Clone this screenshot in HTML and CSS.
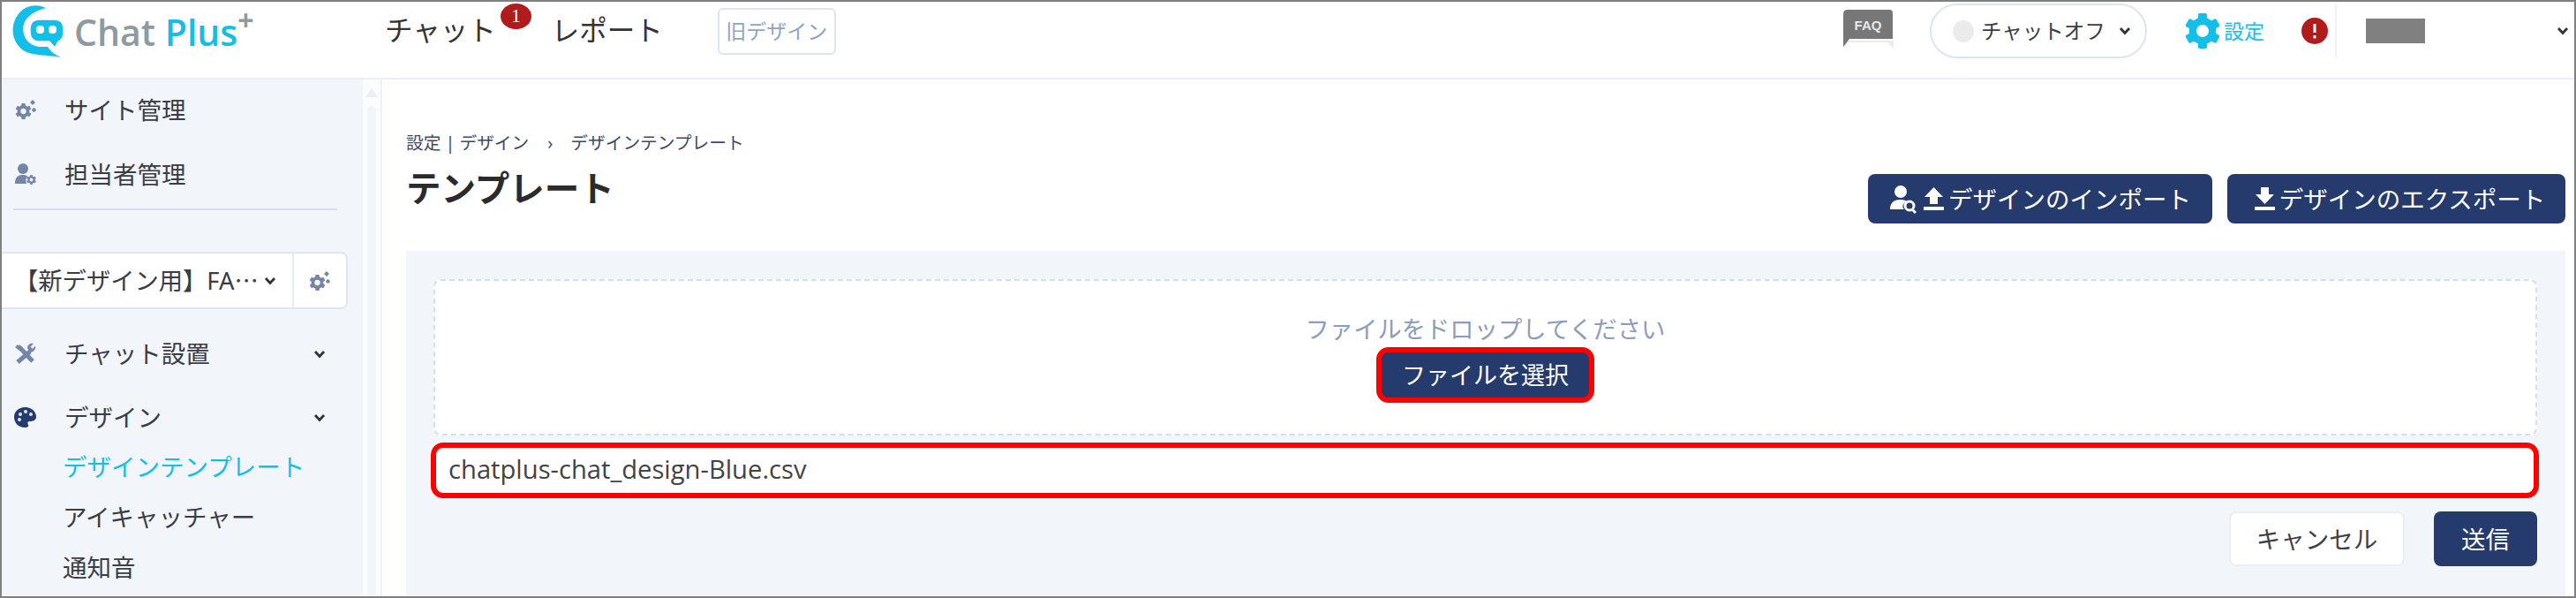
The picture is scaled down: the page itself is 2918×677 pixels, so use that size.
FILE: index.html
```html
<!DOCTYPE html>
<html lang="ja">
<head>
    <meta charset="UTF-8">
    <meta name="viewport" content="width=device-width, initial-scale=1.0">
    <title>テンプレート</title>
    <link rel="stylesheet" href="styles.css">
</head>
<body>
    <svg class="icon-defs" width="0" height="0">
        <symbol id="gear" viewBox="0 0 24 24">
            <circle cx="12" cy="12" r="6.7" fill="none" stroke="currentColor" stroke-width="5"/>
            <g fill="currentColor">
                <rect x="9" y="0" width="6" height="5" rx="1"/>
                <rect x="9" y="0" width="6" height="5" rx="1" transform="rotate(60 12 12)"/>
                <rect x="9" y="0" width="6" height="5" rx="1" transform="rotate(120 12 12)"/>
                <rect x="9" y="0" width="6" height="5" rx="1" transform="rotate(180 12 12)"/>
                <rect x="9" y="0" width="6" height="5" rx="1" transform="rotate(240 12 12)"/>
                <rect x="9" y="0" width="6" height="5" rx="1" transform="rotate(300 12 12)"/>
            </g>
        </symbol>
        <symbol id="cogs" viewBox="0 0 25 22">
            <use href="#gear" x="1" y="4" width="19" height="18"/>
            <path d="M21 0 L24 3 L21 6 L18 3 Z" fill="currentColor"/>
            <circle cx="22.500" cy="11.500" r="2.200" fill="currentColor"/>
        </symbol>
        <symbol id="chevron" viewBox="0 0 14 10">
            <path d="M2 2 L7 7.500 L12 2" fill="none" stroke="currentColor" stroke-width="2.800"/>
        </symbol>
        <symbol id="arrow-up" viewBox="0 0 23 26">
            <path d="M11.500 0 L22 11 H16 V19 H7 V11 H1 Z M0 22 H23 V26 H0 Z" fill="currentColor"/>
        </symbol>
        <symbol id="arrow-down" viewBox="0 0 23 26">
            <path d="M7 0 H16 V8 H22 L11.500 19 L1 8 H7 Z M0 22 H23 V26 H0 Z" fill="currentColor"/>
        </symbol>
    </svg>

    <div class="frame">
        <header class="topbar">
            <div class="logo">
                <svg class="logo-mark" viewBox="14 4 58 62" width="58" height="62">
                    <path d="M52 8 C43 3 28 4 20 16 C10 30 14 50 30 58 C40 62 52 61 69 64 C62 61 57 57 54 52 L44 52 C30 50 24 38 27 26 C30 17 40 11 52 8 Z" fill="#13bfe8"/>
                    <path d="M44 21 H62 C68 21 72 25 72 31 V36 C72 42 68 46 66 46 L62 53 L56 46 H44 C38 46 34 42 34 36 V31 C34 25 38 21 44 21 Z" fill="#13bfe8" stroke="#fff" stroke-width="1.500"/>
                    <rect x="41" y="28" width="9" height="9" rx="4" fill="#fff"/>
                    <rect x="55" y="28" width="9" height="9" rx="4" fill="#fff"/>
                </svg>
                <span class="logo-text">Chat <b>Plus</b><sup>+</sup></span>
            </div>
            <nav class="topnav">
                <a class="topnav-link">チャット<span class="count-badge">1</span></a>
                <a class="topnav-link">レポート</a>
            </nav>
            <button class="old-design">旧デザイン</button>

            <div class="topbar-right">
                <div class="faq">
                    <svg viewBox="0 0 57 44" width="57" height="44">
                        <path d="M0 35 H57 V44 L50 37 H6 L0 44 Z" fill="#eeece4"/>
                        <path d="M5 0 H52 Q56 0 56 4 V33 H7 L0 42 V5 Q0 0 5 0 Z" fill="#777"/>
                        <text x="28" y="23" text-anchor="middle" class="faq-text">FAQ</text>
                    </svg>
                </div>
                <div class="chat-toggle">
                    <span class="chat-dot"></span>
                    <span class="chat-label">チャットオフ</span>
                    <svg class="chat-chevron" width="14" height="10"><use href="#chevron"/></svg>
                </div>
                <svg class="settings-gear" width="40" height="40"><use href="#gear"/></svg>
                <span class="settings-text">設定</span>
                <svg class="alert" viewBox="0 0 30 30" width="30" height="30" preserveAspectRatio="none">
                    <circle cx="15" cy="15" r="15" fill="#b01c1c"/>
                    <rect x="13.500" y="7" width="3" height="10" fill="#fff"/>
                    <rect x="13.500" y="20" width="3" height="3.500" fill="#fff"/>
                </svg>
                <span class="topbar-divider"></span>
                <span class="user-mask"></span>
                <svg class="user-chevron" width="14" height="10"><use href="#chevron"/></svg>
            </div>
        </header>

        <div class="layout">
            <aside class="sidebar">
                <div class="side-row">
                    <svg class="side-icon" width="25" height="22"><use href="#cogs"/></svg>
                    サイト管理
                </div>
                <div class="side-row side-row-gap">
                    <svg class="side-icon" viewBox="0 0 25 24" width="25" height="24">
                        <circle cx="10" cy="6" r="6" fill="currentColor"/>
                        <path d="M1 23 C1 15 5 13 10 13 C12 13 14 13.500 15 14.500 C13 17 13 20 14 23 Z" fill="currentColor"/>
                        <use href="#gear" x="14" y="13" width="11" height="11"/>
                    </svg>
                    担当者管理
                </div>
                <div class="side-divider"></div>

                <div class="site-select">
                    <div class="site-select-name">
                        <span>【新デザイン用】FA⋯</span>
                        <svg width="14" height="10"><use href="#chevron"/></svg>
                    </div>
                    <div class="site-select-gear">
                        <svg class="select-icon" width="25" height="22"><use href="#cogs"/></svg>
                    </div>
                </div>

                <div class="side-row side-group first">
                    <svg class="side-icon" viewBox="0 0 25 24" width="25" height="24">
                        <path d="M5 4 L21 21" stroke="currentColor" stroke-width="5" fill="none"/>
                        <path d="M4 2 L9 6 L6 9 L1 5 Z" fill="currentColor"/>
                        <path d="M18 10 L4 22" stroke="currentColor" stroke-width="5" fill="none"/>
                        <path d="M15 6 C15 2 19 0 22 1 L18.500 4.500 L21 7 L24 3.500 C25 7 22 11 18 11 Z" fill="currentColor"/>
                    </svg>
                    チャット設置
                    <svg class="side-chevron" width="14" height="10"><use href="#chevron"/></svg>
                </div>
                <div class="side-row side-group">
                    <svg class="side-icon" viewBox="0 0 25 23" width="25" height="23">
                        <path d="M12.500 0 C20 0 25 5 25 11 C25 15 21 16 18 16 C15 16 15 18 16 20 C17 22 15 23 12 23 C5 23 0 18 0 11 C0 5 5 0 12.500 0 Z" fill="#253b6e"/>
                        <circle cx="7" cy="8" r="2" fill="#dfe5f0"/>
                        <circle cx="13" cy="5" r="2" fill="#dfe5f0"/>
                        <circle cx="19" cy="8" r="2" fill="#dfe5f0"/>
                        <circle cx="6" cy="14" r="2" fill="#dfe5f0"/>
                    </svg>
                    デザイン
                    <svg class="side-chevron" width="14" height="10"><use href="#chevron"/></svg>
                </div>
                <a class="side-sub active">デザインテンプレート</a>
                <a class="side-sub">アイキャッチャー</a>
                <a class="side-sub">通知音</a>
            </aside>

            <div class="side-scroll">
                <span class="side-scroll-arrow"></span>
                <span class="side-scroll-thumb"></span>
            </div>

            <main class="content">
                <div class="breadcrumb">
                    <span>設定 | デザイン</span>
                    <span class="breadcrumb-sep">›</span>
                    <span>デザインテンプレート</span>
                </div>
                <div class="page-head">
                    <h1>テンプレート</h1>
                    <div class="page-actions">
                        <button class="btn-navy btn-import">
                            <svg viewBox="0 0 31 33" width="31" height="33">
                                <circle cx="13" cy="8" r="7" fill="#fff"/>
                                <path d="M1 28 C1 20 6 17 13 17 C17 17 19 18 20 19 C15 21 14 26 17 28 Z" fill="#fff"/>
                                <circle cx="23" cy="24" r="5" fill="none" stroke="#fff" stroke-width="3"/>
                                <path d="M26 28 L30 32" stroke="#fff" stroke-width="3"/>
                            </svg>
                            <svg class="btn-arrow" width="23" height="26"><use href="#arrow-up"/></svg>
                            <span class="btn-label">デザインのインポート</span>
                        </button>
                        <button class="btn-navy btn-export">
                            <svg class="btn-arrow" width="23" height="26"><use href="#arrow-down"/></svg>
                            <span class="btn-label">デザインのエクスポート</span>
                        </button>
                    </div>
                </div>

                <section class="panel">
                    <div class="dropzone">
                        <p class="dropzone-text">ファイルをドロップしてください</p>
                        <button class="file-button">ファイルを選択</button>
                    </div>
                    <div class="file-name">chatplus-chat_design-Blue.csv</div>
                    <div class="form-actions">
                        <button class="btn-cancel">キャンセル</button>
                        <button class="btn-send">送信</button>
                    </div>
                </section>
            </main>
        </div>
    </div>
</body>
</html>
```

FILE: styles.css
```css
* {
    box-sizing: border-box;
}

html, body {
    margin: 0;
    height: 100%;
}

body {
    font-family: "Noto Sans", "Noto Sans CJK JP", sans-serif;
    color: #3a3d45;
    background: #fff;
    overflow: hidden;
}

button {
    font-family: inherit;
    cursor: pointer;
}

.icon-defs {
    position: absolute;
}

.frame {
    width: 2918px;
    height: 677px;
    border: 2px solid #808080;
    display: flex;
    flex-direction: column;
    overflow: hidden;
}

/* top bar */
.topbar {
    display: flex;
    align-items: center;
    flex: none;
    height: 88px;
    padding-bottom: 20px;
    border-bottom: 2px solid #e9eef7;
}

.logo {
    display: flex;
    align-items: center;
    width: 422px;
    margin-left: 12px;
    margin-top: 2px;
}

.logo-text {
    margin-left: 12px;
    font-family: "Open Sans", sans-serif;
    font-size: 41px;
    font-weight: 600;
    line-height: 50px;
    color: #8f9aa0;
    white-space: nowrap;
}

.logo-text b {
    font-weight: 600;
    color: #13bfe8;
}

.logo-text sup {
    font-size: 32px;
    font-weight: 700;
    line-height: 0;
    vertical-align: 17px;
    color: #8f9aa0;
}

.topnav {
    display: flex;
    gap: 63px;
    margin-top: -3px;
}

.topnav-link {
    position: relative;
    font-size: 31.500px;
    line-height: 44px;
    color: #333;
}

.count-badge {
    position: absolute;
    left: 131px;
    top: -8px;
    width: 35px;
    height: 29px;
    border-radius: 50%;
    background: #b01c1c;
    color: #fff;
    font-family: "Liberation Serif", serif;
    font-size: 21px;
    line-height: 29px;
    text-align: center;
}

.old-design {
    width: 134px;
    height: 53px;
    margin-left: 62px;
    padding: 0 0 3px;
    border: 2px solid #dde5f2;
    border-radius: 6px;
    background: #fff;
    color: #8fa3c4;
    font-size: 23px;
}

.topbar-right {
    display: flex;
    align-items: center;
    margin-left: auto;
    padding-right: 6px;
}

.faq {
    display: flex;
    margin-top: -4px;
}

.faq-text {
    font-family: "Liberation Sans", sans-serif;
    font-size: 15px;
    font-weight: bold;
    fill: #e8e8e8;
}

.chat-toggle {
    display: flex;
    align-items: center;
    width: 246px;
    height: 62px;
    margin-left: 41px;
    padding-left: 24px;
    border: 2px solid #dde5f2;
    border-radius: 31px;
    font-size: 23.500px;
    color: #3a3d45;
}

.chat-label {
    margin-bottom: 3px;
}

.chat-dot {
    width: 24px;
    height: 25px;
    margin-right: 8px;
    border-radius: 50%;
    background: #ebebeb;
}

.chat-chevron {
    margin-left: 15px;
    color: #333;
}

.settings-gear {
    margin-left: 43px;
    color: #13bfe8;
}

.settings-text {
    margin-left: 4px;
    margin-bottom: 3px;
    font-size: 23px;
    color: #13bfe8;
}

.alert {
    margin-left: 42px;
}

.topbar-divider {
    width: 2px;
    height: 60px;
    margin-left: 8px;
    background: #eef1f7;
}

.user-mask {
    width: 67px;
    height: 28px;
    margin-left: 33px;
    background: #808080;
}

.user-chevron {
    margin-left: 149px;
    color: #333;
}

/* sidebar */
.layout {
    display: flex;
    flex: 1;
    min-height: 0;
}

.sidebar {
    flex: none;
    width: 409px;
    background: #f2f5fa;
}

.side-row {
    display: flex;
    align-items: center;
    height: 68px;
    padding-left: 14px;
    padding-bottom: 3px;
    font-size: 27.500px;
    color: #3a3d45;
}

.side-row-gap {
    margin-top: 5px;
}

.side-icon {
    flex: none;
    margin-right: 32px;
    margin-top: 3px;
    color: #7485a8;
}

.side-divider {
    height: 2px;
    margin: 5px 29px 0 13px;
    background: #d8e0ef;
}

.site-select {
    display: flex;
    width: 392px;
    height: 65px;
    margin-top: 47px;
    border: 2px solid #dfe6f2;
    border-left: 0;
    border-radius: 0 8px 8px 0;
    background: #fff;
    font-size: 27.300px;
}

.site-select-name {
    display: flex;
    flex: none;
    align-items: center;
    width: 331px;
    padding: 0 0 3px 14px;
    border-right: 2px solid #e6ebf4;
    white-space: nowrap;
}

.site-select-name svg {
    margin: 3px 0 0 6px;
    color: #333;
}

.site-select-gear {
    display: flex;
    align-items: center;
    padding-left: 16px;
}

.select-icon {
    color: #7485a8;
}

.side-group {
    height: 56px;
    margin-top: 16px;
}

.side-group.first {
    margin-top: 22px;
}

.side-chevron {
    margin-left: auto;
    margin-right: 42px;
    margin-top: 4px;
    color: #333;
}

.side-sub {
    display: flex;
    align-items: center;
    height: 57px;
    padding-left: 69px;
    padding-bottom: 3px;
    font-size: 27.500px;
    color: #3a3d45;
}

.side-sub.active {
    color: #13bfe8;
}

.side-scroll {
    display: flex;
    flex-direction: column;
    align-items: center;
    flex: none;
    width: 22px;
    padding-top: 10px;
    background: #fbfcfe;
    border-right: 2px solid #eef1f7;
}

.side-scroll-arrow {
    width: 0;
    height: 0;
    border-left: 7px solid transparent;
    border-right: 7px solid transparent;
    border-bottom: 10px solid #e9eef7;
}

.side-scroll-thumb {
    flex: 1;
    width: 10px;
    margin-top: 10px;
    border-radius: 5px;
    background: #f2f5fa;
}

/* main */
.content {
    display: flex;
    flex-direction: column;
    flex: 1;
    min-width: 0;
    padding: 58px 10px 0 27px;
}

.breadcrumb {
    display: flex;
    font-size: 19.700px;
    line-height: 28px;
    color: #3f4a66;
}

.breadcrumb-sep {
    margin: 0 20px 0 21px;
}

.page-head {
    display: flex;
    justify-content: space-between;
    height: 63px;
    margin-top: 14px;
}

h1 {
    margin: -2px 0 0;
    font-size: 39.500px;
    font-weight: 700;
    line-height: 50px;
    color: #2b2b2b;
}

.page-actions {
    display: flex;
    align-self: flex-end;
    gap: 17px;
}

.btn-navy {
    display: flex;
    align-items: center;
    justify-content: center;
    height: 56px;
    padding: 0;
    border: 0;
    border-radius: 8px;
    background: #253b6e;
    color: #fff;
    font-size: 27.500px;
    white-space: nowrap;
}

.btn-label {
    margin-bottom: 3px;
}

.btn-import {
    width: 390px;
}

.btn-export {
    width: 383px;
}

.btn-arrow {
    flex: none;
    margin-left: 8px;
    margin-right: 5px;
    color: #fff;
}

.panel {
    flex: 1;
    margin-top: 31px;
    padding: 32px 32px 0 31px;
    background: #f2f5fa;
}

.dropzone {
    display: flex;
    flex-direction: column;
    align-items: center;
    height: 177px;
    padding-top: 35px;
    border: 2px dashed #d5deef;
    border-radius: 8px;
    background: #fff;
}

.dropzone-text {
    margin: 0;
    font-size: 27.300px;
    line-height: 40px;
    color: #8d9cbc;
}

.file-button {
    width: 247px;
    height: 63px;
    padding: 0 0 2px;
    border: 6px solid #f00;
    border-radius: 14px;
    background: #253b6e;
    color: #fff;
    font-size: 27px;
}

.file-name {
    display: flex;
    align-items: center;
    height: 63px;
    margin: 8px -2px 0 -3px;
    padding: 0 0 4px 14px;
    border: 6px solid #f00;
    border-radius: 14px;
    background: #fff;
    font-family: "Open Sans", sans-serif;
    font-size: 29.200px;
    color: #444;
}

.form-actions {
    display: flex;
    justify-content: flex-end;
    gap: 33px;
    margin-top: 15px;
}

.btn-cancel, .btn-send {
    height: 62px;
    padding: 0 0 3px;
    border-radius: 8px;
    font-size: 27.500px;
}

.btn-cancel {
    width: 199px;
    border: 2px solid #e9eef7;
    background: #fff;
    color: #3f4148;
}

.btn-send {
    width: 117px;
    border: 0;
    background: #253b6e;
    color: #fff;
}
```
